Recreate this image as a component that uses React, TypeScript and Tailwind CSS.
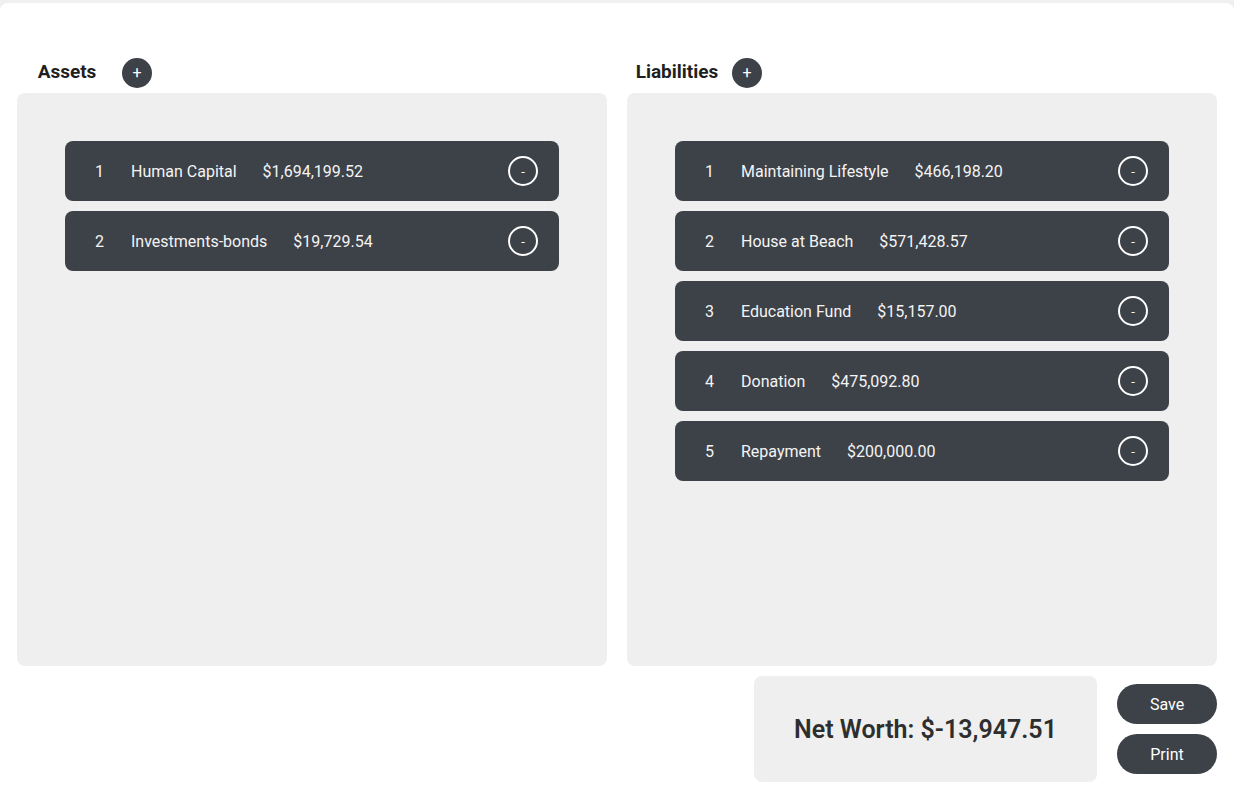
const assets = [
  { name: 'Human Capital', amount: '$1,694,199.52' },
  { name: 'Investments-bonds', amount: '$19,729.54' },
];

const liabilities = [
  { name: 'Maintaining Lifestyle', amount: '$466,198.20' },
  { name: 'House at Beach', amount: '$571,428.57' },
  { name: 'Education Fund', amount: '$15,157.00' },
  { name: 'Donation', amount: '$475,092.80' },
  { name: 'Repayment', amount: '$200,000.00' },
];

type Item = { name: string; amount: string };

// Section: header with add button + grey panel of rows
const Section = ({ title, items }: { title: string; items: Item[] }) => (
  <div className="flex flex-col">
    <div className="flex items-center h-[30px] mb-[5px]">
      <span className="w-[100px] text-center text-[19px] font-bold text-[#1f1f1f] -mt-[1px]">{title}</span>
      <button className="ml-[5px] w-[30px] h-[30px] rounded-full bg-[#3d4148] text-white text-[16px] leading-none flex items-center justify-center">
        +
      </button>
    </div>
    <div className="h-[573px] rounded-lg bg-[#efefef] px-[48px] pt-[48px] flex flex-col gap-[10px]">
      {items.map((item, i) => (
        <div
          key={item.name}
          className="h-[60px] rounded-lg bg-[#3d4148] flex items-center pl-[30px] pr-[21px] text-[16px] text-[#f4f4f4]"
        >
          <span className="pt-[2px]">{i + 1}</span>
          <span className="ml-[27px] pt-[2px]">{item.name}</span>
          <span className="ml-[26px] pt-[2px]">{item.amount}</span>
          <button className="ml-auto w-[30px] h-[30px] rounded-full border-2 border-white flex items-center justify-center text-[13px] leading-none text-white">
            -
          </button>
        </div>
      ))}
    </div>
  </div>
);

export default function App() {
  return (
    <div className="min-h-[800px] bg-[#f0f0f0] pt-[3px]" style={{ fontFamily: 'Roboto, "Noto Sans", sans-serif' }}>
      <div className="min-h-[797px] bg-white rounded-t-lg px-[17px] pt-[55px]">
        <div className="grid grid-cols-2 gap-[20px]">
          <Section title="Assets" items={assets} />
          <Section title="Liabilities" items={liabilities} />
        </div>
        <div className="flex justify-end items-center gap-[20px] mt-[10px]">
          <div className="w-[343px] h-[106px] rounded-lg bg-[#efefef] flex items-center justify-center pt-[2px] text-[25px] font-semibold text-[#2e2e2e]">
            Net Worth: $-13,947.51
          </div>
          <div className="flex flex-col gap-[10px]">
            <button className="w-[100px] h-[40px] rounded-full bg-[#3d4148] text-white text-[16px] pt-[1px]">Save</button>
            <button className="w-[100px] h-[40px] rounded-full bg-[#3d4148] text-white text-[16px] pt-[1px]">Print</button>
          </div>
        </div>
      </div>
    </div>
  );
}
